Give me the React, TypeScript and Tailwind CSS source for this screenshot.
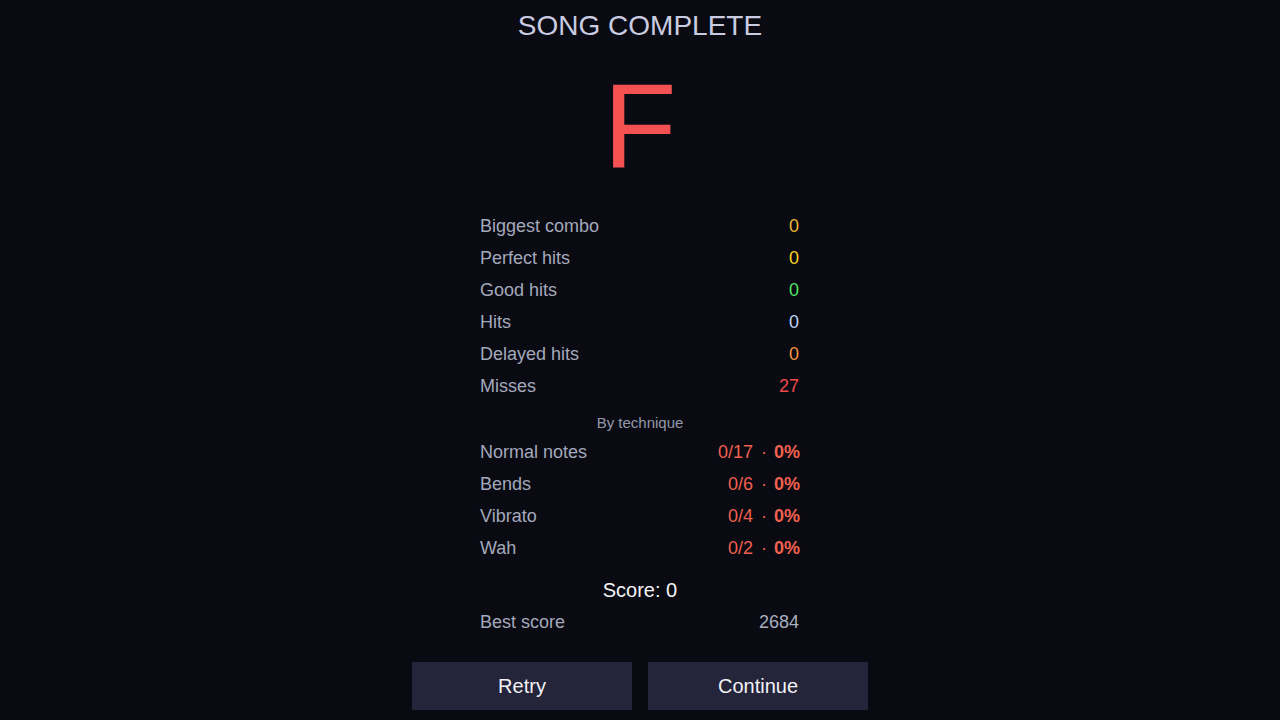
import React from "react";

const stats: { label: string; value: string; color: string }[] = [
  { label: "Biggest combo", value: "0", color: "text-[#eab72c]" },
  { label: "Perfect hits", value: "0", color: "text-[#f7d31f]" },
  { label: "Good hits", value: "0", color: "text-[#4fe463]" },
  { label: "Hits", value: "0", color: "text-[#bcd3f2]" },
  { label: "Delayed hits", value: "0", color: "text-[#f3943f]" },
  { label: "Misses", value: "27", color: "text-[#f24a4a]" },
];

const techniques: { label: string; hit: string }[] = [
  { label: "Normal notes", hit: "0/17" },
  { label: "Bends", hit: "0/6" },
  { label: "Vibrato", hit: "0/4" },
  { label: "Wah", hit: "0/2" },
];

export default function App() {
  return (
    <div
      className="w-[1280px] h-[720px] bg-[#0a0a12] overflow-hidden flex flex-col items-center"
      style={{ fontFamily: '"Liberation Sans", Arial, sans-serif' }}
    >
      <h1 className="mt-[10px] text-[28px] leading-[32px] text-[#c9cce0] tracking-normal">
        SONG COMPLETE
      </h1>
      <div className="mt-[24px] text-[120px] leading-[120px] h-[120px] text-[#f45252]">F</div>

      <div className="mt-[24px] w-[320px] flex flex-col">
        {stats.map((s) => (
          <div key={s.label} className="h-[32px] flex items-center justify-between text-[18px] leading-[32px]">
            <span className="text-[#a3a9bb]">{s.label}</span>
            <span className={`${s.color} pr-[1px]`}>{s.value}</span>
          </div>
        ))}

        <div className="mt-[11px] mb-[3px] h-[20px] text-center text-[15px] leading-[20px] text-[#9499aa]">
          By technique
        </div>

        {techniques.map((t) => (
          <div key={t.label} className="h-[32px] flex items-center justify-between text-[18px] leading-[32px]">
            <span className="text-[#a3a9bb]">{t.label}</span>
            <span className="flex items-center text-[#f0604f]">
              <span>{t.hit}</span>
              <span className="ml-[8px] mr-[7px]">·</span>
              <span className="font-bold">0%</span>
            </span>
          </div>
        ))}

        <div className="mt-[11px] h-[30px] text-center text-[20px] leading-[30px] text-[#f4f4f8]">
          Score: 0
        </div>
        <div className="mt-[1px] h-[32px] flex items-center justify-between text-[18px] leading-[32px]">
          <span className="text-[#a3a9bb]">Best score</span>
          <span className="text-[#a9afc0] pr-[1px]">2684</span>
        </div>
      </div>

      <div className="mt-[24px] flex gap-[16px]">
        <button className="w-[220px] h-[48px] bg-[#24243a] text-[20px] leading-[48px] text-[#f2f2f6]">
          Retry
        </button>
        <button className="w-[220px] h-[48px] bg-[#24243a] text-[20px] leading-[48px] text-[#f2f2f6]">
          Continue
        </button>
      </div>
    </div>
  );
}
